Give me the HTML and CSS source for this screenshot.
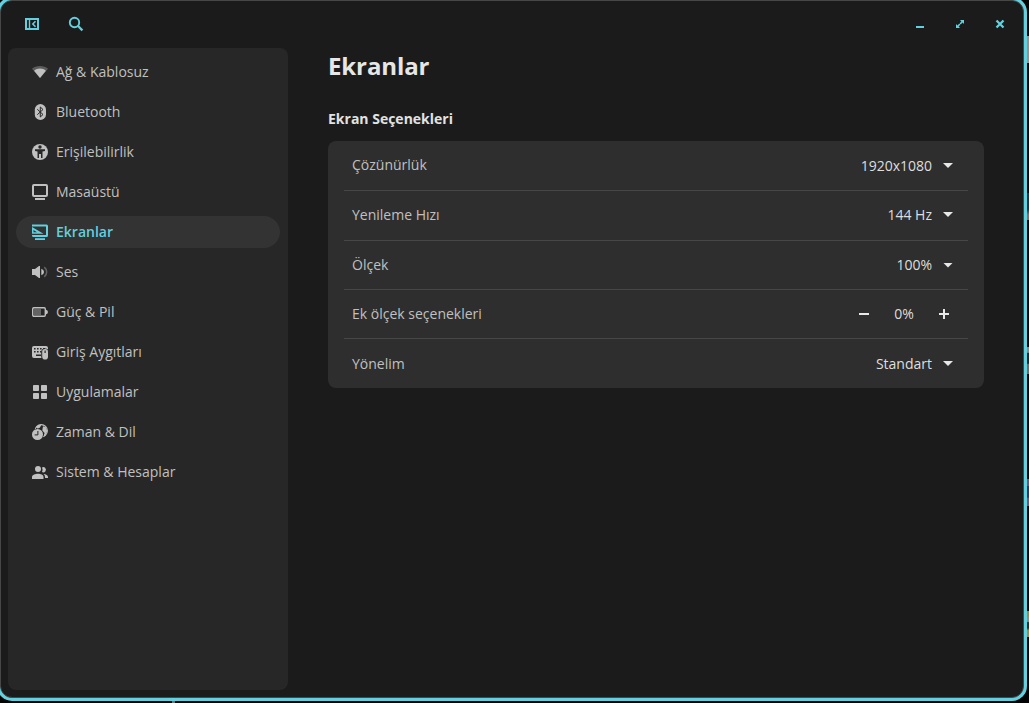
FILE: index.html
```html
<!DOCTYPE html>
<html lang="tr">
<head>
<meta charset="utf-8">
<title>Ekranlar</title>
<link rel="stylesheet" href="styles.css">
</head>
<body>
<div class="slivers">
  <i class="sliver s1"></i><i class="sliver s2"></i><i class="sliver s3"></i><i class="sliver s4"></i><i class="sliver s5"></i><i class="sliver s6"></i>
</div>
<div class="window">
  <header class="titlebar">
    <div class="tools">
      <svg width="16" height="16" viewBox="0 0 16 16" fill="none" stroke="currentColor"><path d="M2 3h12v10H2z" stroke-width="2"/><path d="M5.500 3v10" stroke-width="1.400"/><path d="M11.500 5.200 8.800 8l2.700 2.800" stroke-width="1.600"/></svg>
      <svg width="16" height="16" viewBox="0 0 16 16" fill="none" stroke="currentColor"><circle cx="6.500" cy="6.500" r="4.700" stroke-width="1.900"/><path d="M9.800 9.800 14.400 14.400" stroke-width="2.200"/></svg>
    </div>
    <div class="controls">
      <svg width="16" height="16" viewBox="0 0 16 16"><path d="M4 10h8v2H4z" fill="currentColor"/></svg>
      <svg width="16" height="16" viewBox="0 0 16 16"><path d="M8 4h4v4l-1.400-1.400L6.600 10.600 8 12H4V8l1.400 1.400L9.400 5.400z" fill="currentColor"/><path d="M7 7l2 2" stroke="#1b1b1b" stroke-width=".6"/></svg>
      <svg width="16" height="16" viewBox="0 0 16 16"><path d="m4.500 4.500 7 7m0-7-7 7" stroke="currentColor" stroke-width="2.300"/></svg>
    </div>
  </header>
  <div class="body">
    <nav class="sidebar">
      <a class="item"><svg class="icon" viewBox="0 0 16 16" fill="currentColor"><path d="M8 2C4.800 2 2.100 3 0 4.800L8 14l8-9.200C13.900 3 11.200 2 8 2z" opacity=".35"/><path d="M8 4.600c-2.400 0-4.300.8-5.900 2.100L8 14l5.900-7.300C12.300 5.400 10.400 4.600 8 4.600z"/></svg>Ağ &amp; Kablosuz</a>
      <a class="item"><svg class="icon" viewBox="0 0 16 16"><rect x="2.800" width="11.200" height="16" rx="5.600" fill="currentColor"/><path d="M5.300 5.300 11 10.500 8.300 13V3L11 5.500 5.300 10.700" fill="none" stroke="#272727" stroke-width="1"/></svg>Bluetooth</a>
      <a class="item"><svg class="icon" viewBox="0 0 16 16"><circle cx="8" cy="8" r="8" fill="currentColor"/><circle cx="8" cy="3" r="1.700" fill="#272727"/><path d="M3 5.300h10v1.700l-2.500.5V14H9v-4H7v4H5.500V7.500L3 7z" fill="#272727"/></svg>Erişilebilirlik</a>
      <a class="item"><svg class="icon" viewBox="0 0 16 16"><rect x="1" y="1" width="14" height="11" rx="1" fill="none" stroke="currentColor" stroke-width="2"/><path d="M3 14h10v2H3z" fill="currentColor"/></svg>Masaüstü</a>
      <a class="item active"><svg class="icon" viewBox="0 0 16 16"><path d="M0 .500h14.500Q16 .500 16 2v9.500q0 1.500-1.500 1.500H1.500Q0 13 0 11.500V11h14V2.500H0z" fill="currentColor"/><path d="M0 3 11.500 9.800H0z" fill="currentColor"/><path d="M1.500 6 5 8.300H1.500z" fill="#333"/><path d="M3 14.200h10V16H3z" fill="currentColor"/></svg>Ekranlar</a>
      <a class="item"><svg class="icon" viewBox="0 0 16 16"><path d="M0 5h3l4-3h1v12H7l-4-3H0z" fill="currentColor"/><path d="M9.300 4.800q2.700.8 2.700 3.200t-2.700 3.200z" fill="currentColor"/><path d="M12.300 3.200q2.400 2 2.400 4.800t-2.400 4.800" fill="none" stroke="currentColor" stroke-width="1.500" opacity=".4"/></svg>Ses</a>
      <a class="item"><svg class="icon" viewBox="0 0 16 16"><rect x=".7" y="3.700" width="12.600" height="8.600" rx="1.200" fill="none" stroke="currentColor" stroke-width="1.400"/><path d="M2 5h7v6H2z" fill="currentColor" opacity=".4"/><path d="M13.500 5.500q2.500.5 2.500 2.500t-2.500 2.500z" fill="currentColor"/></svg>Güç &amp; Pil</a>
      <a class="item"><svg class="icon" viewBox="0 0 16 16"><rect y="2" width="16" height="12" rx="2" fill="currentColor"/><path d="M2 4h1.600v1.600H2zm3 0h1.600v1.600H5zm3 0h1.600v1.600H8zm3 0h2v1h-2zM2 7h1.600v1.600H2zm3 0h1.600v1.600H5zm3 0h1.500v1.600H8zM4 10.500h5V12H4z" fill="#272727"/><rect x="9.200" y="4.500" width="7.600" height="11.500" rx="3.500" fill="#272727"/><rect x="10.200" y="5" width="5.800" height="10.500" rx="2.800" fill="currentColor"/><path d="M12.500 6.500h1.200V9h-1.200z" fill="#272727"/></svg>Giriş Aygıtları</a>
      <a class="item"><svg class="icon" viewBox="0 0 16 16" fill="currentColor"><rect x="1" y="1" width="6" height="6" rx=".8"/><rect x="9" y="1" width="6" height="6" rx=".8"/><rect x="1" y="9" width="6" height="6" rx=".8"/><rect x="9" y="9" width="6" height="6" rx=".8"/></svg>Uygulamalar</a>
      <a class="item"><svg class="icon" viewBox="0 0 16 16"><circle cx="9.200" cy="6.800" r="6.200" fill="none" stroke="currentColor" stroke-width="1.100"/><path d="M4 3Q6 .3 9.500.5L8 3.500 5.500 5zM11 2.200 14 3.200 15.300 7 13.200 12 11.500 12.500 12.600 9 10.300 6.500z" fill="currentColor"/><circle cx="5.500" cy="10.500" r="6.100" fill="#272727"/><circle cx="5.500" cy="10.500" r="5.500" fill="currentColor"/><path d="M5.900 7v3.900H2.600" fill="none" stroke="#272727"/></svg>Zaman &amp; Dil</a>
      <a class="item"><svg class="icon" viewBox="0 0 16 16" fill="currentColor"><circle cx="6" cy="5" r="3"/><path d="M0 15v-2C0 10.800 3.500 9.800 6 9.800s5.500 1 5.500 3.200v2z"/><path d="M10 3.500a2.600 2.600 0 1 1 0 4.500 5 5 0 0 0 0-4.500zM11.500 10c2.500.2 4.500 1.200 4.500 3v1h-3v-1q0-1.800-1.500-3z"/></svg>Sistem &amp; Hesaplar</a>
    </nav>
    <main class="page">
      <h1>Ekranlar</h1>
      <h2>Ekran Seçenekleri</h2>
      <section class="card">
        <div class="row"><span class="high">Çözünürlük</span><span class="value">1920x1080<i class="caret"></i></span></div>
        <div class="row"><span class="high">Yenileme Hızı</span><span class="value high">144 Hz<i class="caret"></i></span></div>
        <div class="row short"><span>Ölçek</span><span class="value">100%<i class="caret"></i></span></div>
        <div class="row short"><span>Ek ölçek seçenekleri</span>
          <span class="spin"><svg width="16" height="16" viewBox="0 0 16 16"><path d="M3 7h10v2H3z" fill="currentColor"/></svg><span>0%</span><svg width="16" height="16" viewBox="0 0 16 16"><path d="M3 7h4V3h2v4h4v2H9v4H7V9H3z" fill="currentColor"/></svg></span></div>
        <div class="row"><span>Yönelim</span><span class="value">Standart<i class="caret"></i></span></div>
      </section>
    </main>
  </div>
</div>
</body>
</html>
```
FILE: styles.css
```css
* { box-sizing: border-box; }
body {
  margin: 0;
  width: 1029px;
  height: 703px;
  overflow: hidden;
  background: #030404;
  font: 14px/20px "Open Sans", "Noto Sans", sans-serif;
  color: #c0c0c0;
}
svg { display: block; flex: none; }
.window {
  position: relative;
  width: 1024px;
  height: 698px;
  border: 1px solid #474747;
  border-radius: 12px;
  background: #1b1b1b;
  box-shadow: 0 0 0 3px #63d0df;
}
.titlebar {
  display: flex;
  justify-content: space-between;
  height: 47px;
  padding: 15px 15px 0 23px;
  color: #63d0df;
}
.tools { display: flex; gap: 28px; }
.controls { display: flex; gap: 24px; }
.body { display: flex; }
.sidebar {
  width: 280px;
  height: 642px;
  margin-left: 7px;
  padding: 8px;
  border-radius: 8px;
  background: #272727;
  display: flex;
  flex-direction: column;
  gap: 8px;
}
.item {
  display: flex;
  align-items: center;
  gap: 8px;
  height: 32px;
  padding: 0 16px;
  border-radius: 16px;
}
.icon { width: 16px; height: 16px; }
.active { background: #333; color: #63d0df; font-weight: 600; }
.page { width: 656px; margin-left: 40px; }
h1 {
  margin: 0;
  font-size: 24px;
  line-height: 36px;
  font-weight: 700;
  letter-spacing: -0.1px;
  color: #e6e6e6;
}
h2 {
  margin: 25px 0 12px;
  font-size: 14px;
  line-height: 20px;
  font-weight: 700;
  color: #e2e2e2;
}
.card {
  padding: 0 16px;
  border-radius: 8px;
  background: #2e2e2e;
}
.row {
  display: flex;
  align-items: center;
  justify-content: space-between;
  height: 50px;
  padding: 0 15px 0 8px;
  border-bottom: 1px solid #474747;
}
.row.short { height: 49px; }
.row:last-child { height: 49px; border-bottom: 0; }
.value { display: flex; align-items: center; gap: 11px; color: #dedede; }
.high { padding-bottom: 2px; }
.caret {
  width: 10px;
  height: 5px;
  background: #e8e8e8;
  clip-path: polygon(0 0, 100% 0, 50% 100%);
}
.spin { display: flex; align-items: center; margin-right: 1px; color: #e8e8e8; }
.spin span { width: 64px; text-align: center; color: #dedede; }
.slivers { position: absolute; inset: 0; }
.sliver { position: absolute; left: 1027px; width: 2px; }
.s1 { top: 36px; height: 27px; background: #a28c88; }
.s2 { top: 193px; height: 27px; background: linear-gradient(#1b3342 0 60%, #9b6258 80%); }
.s3 { top: 347px; height: 27px; background: linear-gradient(#8d8583 0 20%, #1c2530 22% 60%, #74675e 65%); }
.s4 { top: 479px; height: 27px; background: linear-gradient(#7c4b83 0 25%, #3b3169 26% 68%, #7c4b83 70%); }
.s5 { top: 611px; height: 26px; background: linear-gradient(#a58e1d 0 20%, #8e8c85 25% 40%, #302d12 45% 65%, #a58e1d 75%); }
.s6 { left: 172px; top: 701px; height: 2px; width: 3px; background: #6d7570; }
```
